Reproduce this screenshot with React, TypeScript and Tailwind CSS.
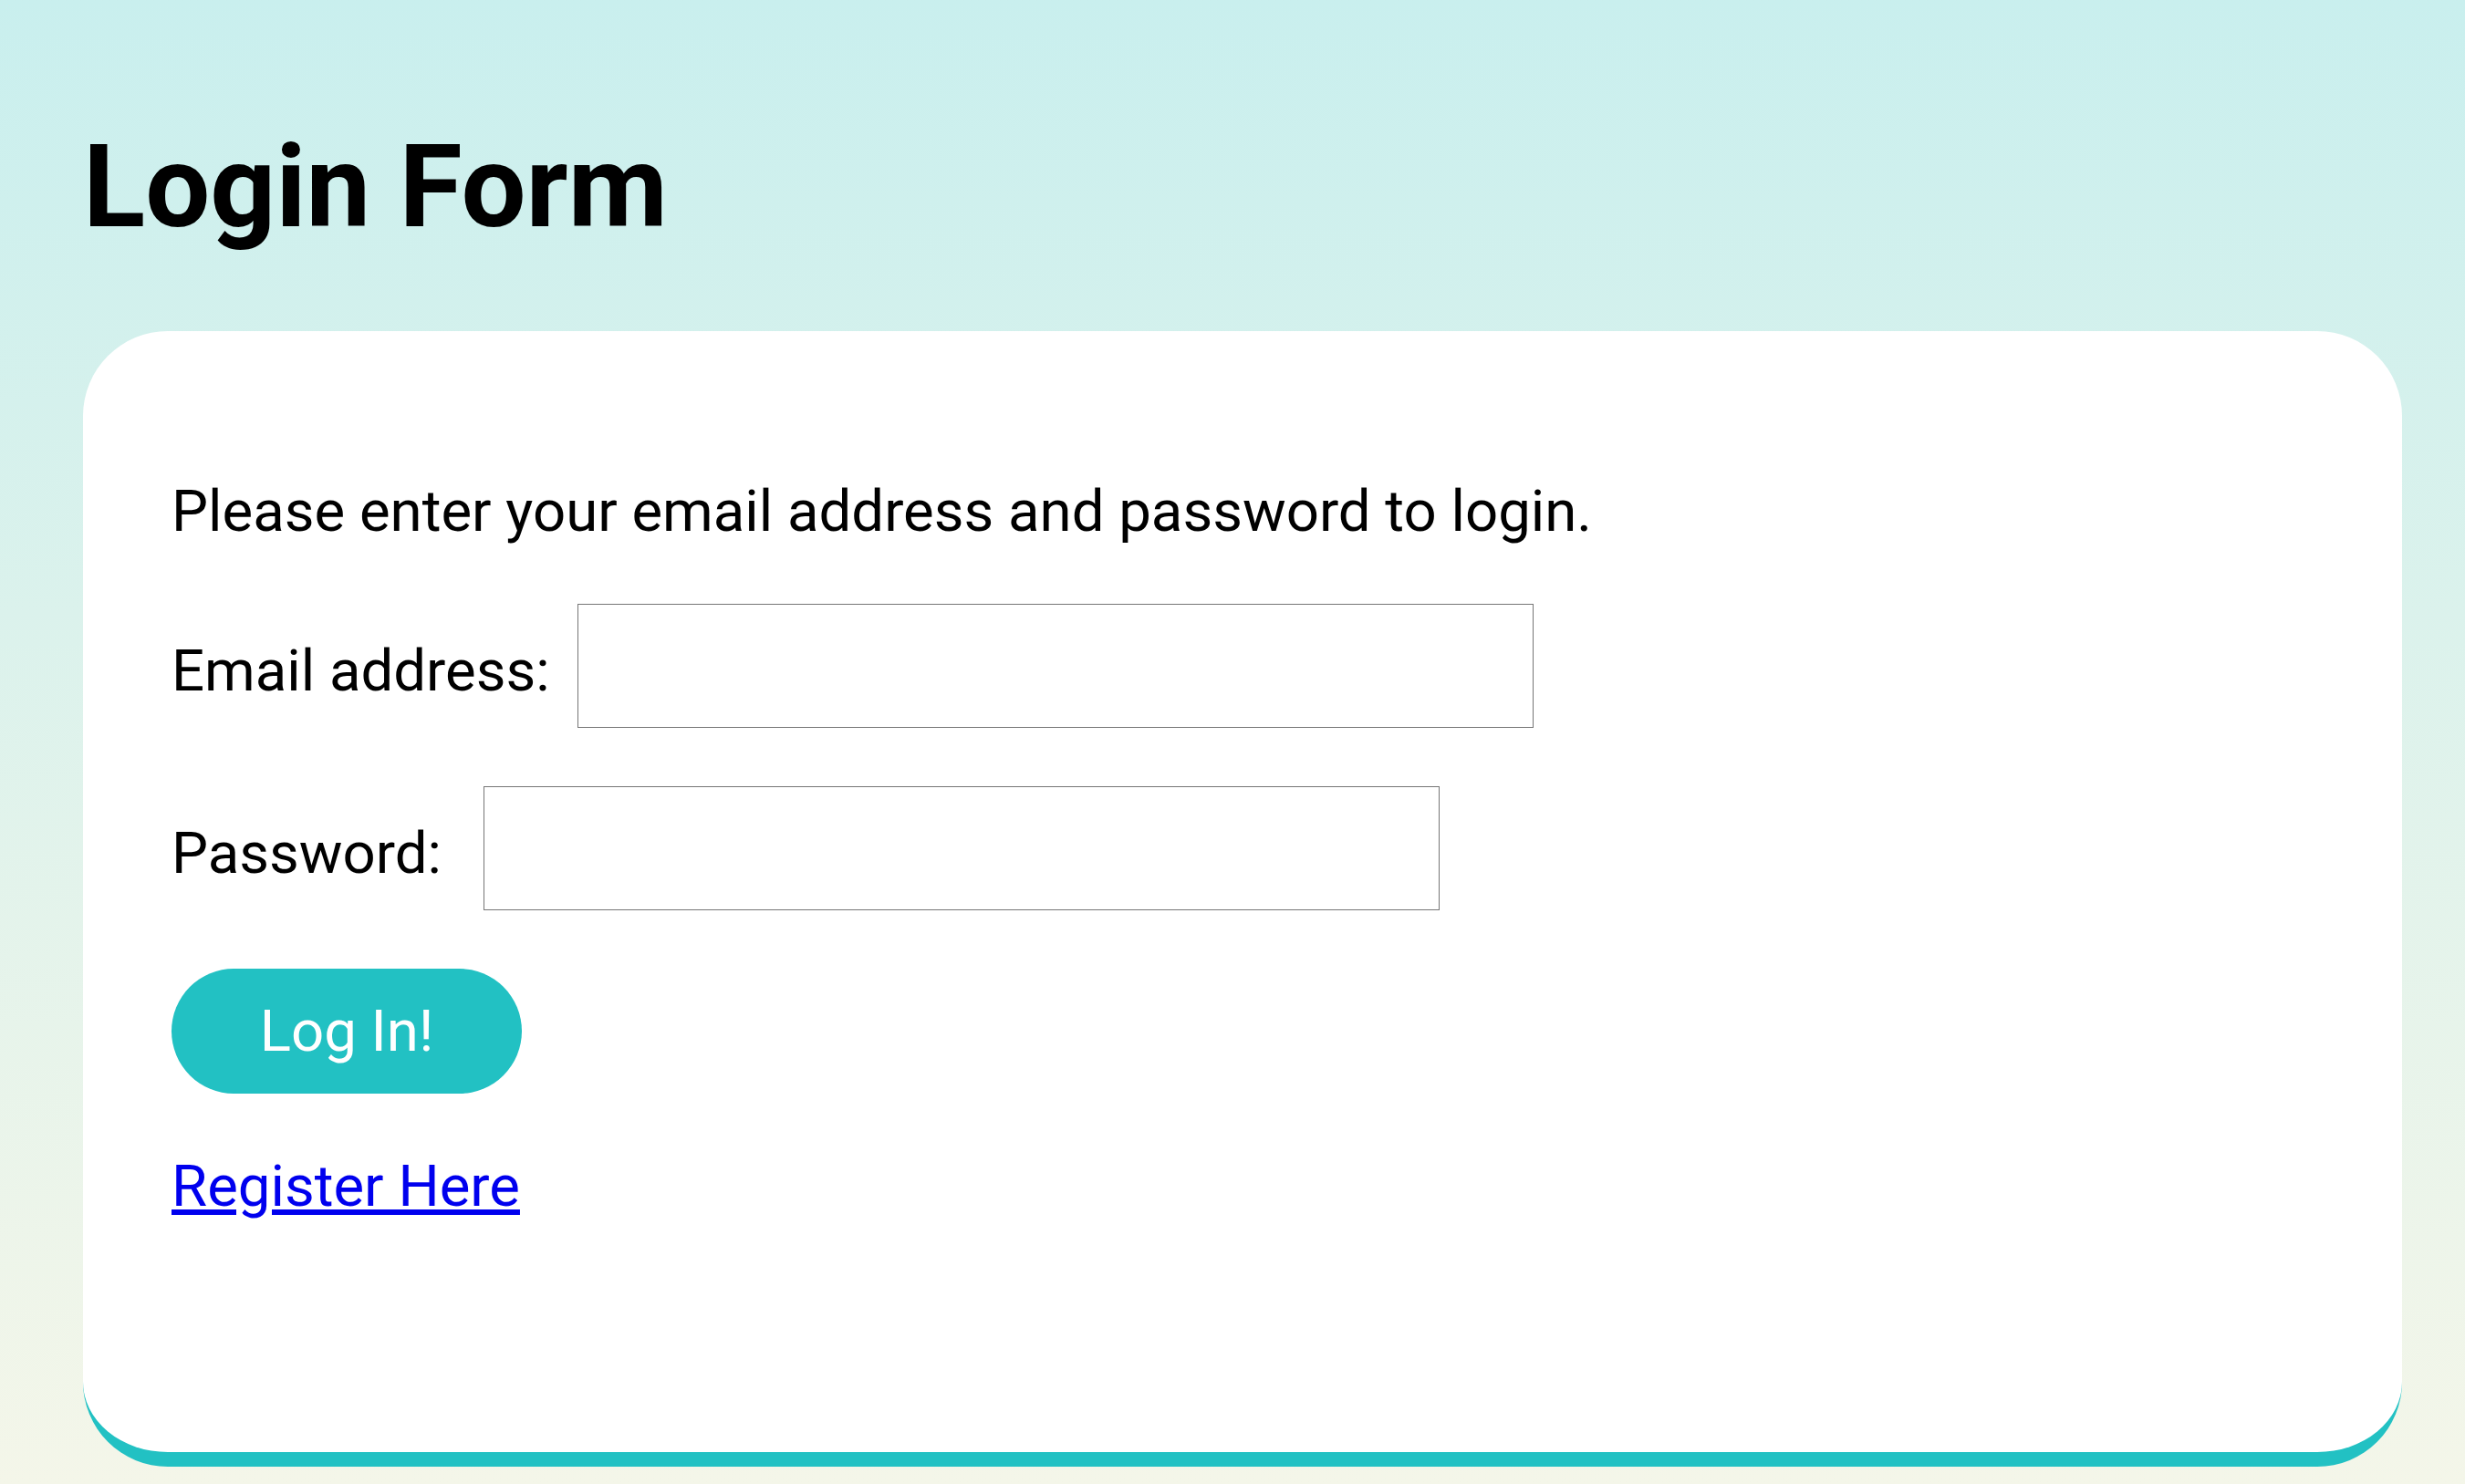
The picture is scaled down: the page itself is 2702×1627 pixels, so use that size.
export default function App() {
  return (
    <div
      className="min-h-screen w-full bg-gradient-to-b from-[#c9efee] to-[#f4f6e9] pt-[127px] text-black"
      style={{ fontFamily: 'Roboto, "Liberation Sans", sans-serif' }}
    >
      <h1 className="ml-[91px] text-[126px] leading-[157px] font-bold">Login Form</h1>

      <div className="mt-[79px] ml-[91px] w-[2542px] rounded-[93px] border-b-[16px] border-[#22c1c3] bg-white pt-[160px] pl-[97px] pb-[254px]">
        <p className="text-[63.5px] leading-[75px]">
          Please enter your email address and password to login.
        </p>

        {/* Email */}
        <div className="mt-[64px] flex items-start">
          <label htmlFor="email" className="mt-[36px] w-[445px] shrink-0 text-[63.5px] leading-[75px]">
            Email address:
          </label>
          <input
            id="email"
            type="email"
            className="h-[136px] w-[1048px] border border-[#767676] bg-white px-2 text-[64px] outline-none"
          />
        </div>

        {/* Password */}
        <div className="mt-[64px] flex items-start">
          <label htmlFor="password" className="mt-[36px] w-[342px] shrink-0 text-[63.5px] leading-[75px]">
            Password:
          </label>
          <input
            id="password"
            type="password"
            className="h-[136px] w-[1048px] border border-[#767676] bg-white px-2 text-[64px] outline-none"
          />
        </div>

        <button className="mt-[64px] flex h-[137px] w-[384px] items-center justify-center rounded-full bg-[#22c1c3] text-[63.5px] leading-[75px] text-white">
          Log In!
        </button>

        <div className="mt-[64px]">
          <a href="#" className="text-[63.5px] leading-[75px] text-[#0000ee] underline">
            Register Here
          </a>
        </div>
      </div>
    </div>
  )
}
